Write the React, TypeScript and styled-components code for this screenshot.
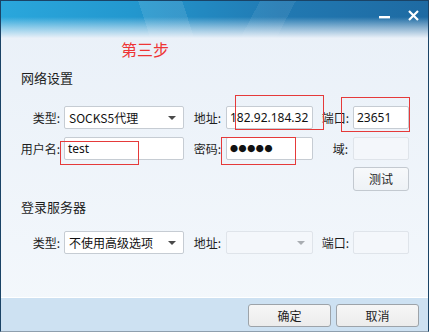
import React from 'react';
import styled, { createGlobalStyle } from 'styled-components';

const GlobalStyle = createGlobalStyle`
    html, body {
        margin: 0;
        padding: 0;
        background: #ffffff;
    }
    * {
        box-sizing: border-box;
    }
`;

const Window = styled.div`
    position: relative;
    width: 429px;
    height: 332px;
    display: flex;
    flex-direction: column;
    border: 1px solid #1a4366;
    border-bottom-color: #8e9fae;
    background: linear-gradient(180deg, #e9f0f8 0%, #f4f8fc 100%);
    font-family: "Noto Sans CJK SC", "Noto Sans", sans-serif;
    font-size: 12px;
    color: #1e1e1e;
    overflow: hidden;
`;

const TitleBar = styled.div`
    height: 37px;
    flex: 0 0 auto;
    display: flex;
    justify-content: flex-end;
    align-items: flex-start;
    gap: 18px;
    padding: 9px 9px 0 0;
    background:
        linear-gradient(180deg, rgba(233, 240, 248, 0) 0px, rgba(233, 240, 248, 0) 16px, rgba(233, 240, 248, 0.55) 27px, #e9f0f8 37px),
        linear-gradient(72deg, transparent 34%, rgba(255, 255, 255, 0.10) 34%, rgba(255, 255, 255, 0.10) 44%, transparent 44%),
        linear-gradient(118deg, transparent 58%, rgba(255, 255, 255, 0.07) 58%, rgba(255, 255, 255, 0.07) 66%, transparent 66%),
        linear-gradient(95deg, #2aa7dc 0%, #2398cf 30%, #2179b2 65%, #1e6aa2 100%);
`;

const ControlButton = styled.div`
    width: 11px;
    height: 11px;
    display: flex;
    align-items: center;
    justify-content: center;
`;

const StepTitle = styled.div`
    height: 22px;
    padding-left: 120px;
    font-size: 16px;
    line-height: 22px;
    color: #ee3535;
`;

const SectionTitle = styled.div<{ $top: number }>`
    margin-top: ${(p) => p.$top}px;
    padding-left: 20px;
    font-size: 13px;
    line-height: 18px;
`;

const FormGrid = styled.div<{ $top: number }>`
    margin-top: ${(p) => p.$top}px;
    padding-left: 19px;
    display: grid;
    grid-template-columns: 44px 120px 42px 87px 40px 56px;
    grid-auto-rows: 23px;
    row-gap: 8px;
    align-items: center;
`;

const Label = styled.div<{ $pad?: number }>`
    text-align: right;
    padding-right: ${(p) => p.$pad ?? 4}px;
    line-height: 23px;
    white-space: nowrap;
`;

const Field = styled.div<{ $disabled?: boolean; $dots?: boolean }>`
    height: 23px;
    border: 1px solid ${(p) => (p.$disabled ? '#dfe4ea' : '#c6ccd3')};
    border-radius: 2px;
    background: ${(p) => (p.$disabled ? '#f4f7fb' : '#ffffff')};
    padding-left: 3px;
    font-family: "Noto Sans", "Noto Sans CJK SC", sans-serif;
    font-size: ${(p) => (p.$dots ? '8px' : '12px')};
    letter-spacing: ${(p) => (p.$dots ? '0.6px' : '0')};
    line-height: 21px;
    color: #111;
    white-space: nowrap;
    overflow: hidden;
`;

const Select = styled(Field)`
    position: relative;
    font-family: "Noto Sans CJK SC", "Noto Sans", sans-serif;
    font-size: 12px;
    padding-left: 4px;
`;

const Arrow = styled.span<{ $disabled?: boolean }>`
    position: absolute;
    right: 7px;
    top: 9px;
    width: 0;
    height: 0;
    border-left: 4px solid transparent;
    border-right: 4px solid transparent;
    border-top: 4px solid ${(p) => (p.$disabled ? '#a9adb2' : '#4a4a4a')};
`;

const TestButton = styled.div`
    grid-column: 6;
    height: 24px;
    margin-top: -1px;
    border: 1px solid #c3c9d0;
    border-radius: 3px;
    background: linear-gradient(180deg, #f7f9fb 0%, #eef2f6 100%);
    text-align: center;
    line-height: 22px;
`;

const Footer = styled.div`
    margin-top: auto;
    height: 34px;
    flex: 0 0 auto;
    border-top: 1px solid #ffffff;
    background: #cde1f2;
    display: flex;
    justify-content: flex-end;
    gap: 5px;
    padding: 6px 9px 0 0;
`;

const DialogButton = styled.div`
    width: 83px;
    height: 23px;
    border: 1px solid #9da3a9;
    border-radius: 3px;
    background: linear-gradient(180deg, #f6f6f6 0%, #ececec 100%);
    text-align: center;
    line-height: 21px;
`;

const Annotation = styled.div`
    position: absolute;
    border: 1px solid #e53a3a;
    pointer-events: none;
`;

const marks = [
    { left: 234, top: 94, width: 89, height: 35 },
    { left: 340, top: 96, width: 69, height: 35 },
    { left: 59, top: 140, width: 79, height: 24 },
    { left: 220, top: 136, width: 75, height: 28 },
];

export default function App() {
    return (
        <>
            <GlobalStyle />
            <Window>
                <TitleBar>
                    <ControlButton>
                        <svg width="11" height="11" viewBox="0 0 11 11">
                            <rect x="0" y="6" width="11" height="2.4" fill="#ffffff" />
                        </svg>
                    </ControlButton>
                    <ControlButton>
                        <svg width="11" height="11" viewBox="0 0 11 11">
                            <path d="M1 1 L10 10 M10 1 L1 10" stroke="#ffffff" strokeWidth="2.2" />
                        </svg>
                    </ControlButton>
                </TitleBar>
                <StepTitle>第三步</StepTitle>

                <SectionTitle $top={9}>网络设置</SectionTitle>
                <FormGrid $top={19}>
                    <Label>类型:</Label>
                    <Select>
                        SOCKS5代理
                        <Arrow />
                    </Select>
                    <Label $pad={5}>地址:</Label>
                    <Field>182.92.184.32</Field>
                    <Label>端口:</Label>
                    <Field>23651</Field>

                    <Label>用户名:</Label>
                    <Field>test</Field>
                    <Label $pad={5}>密码:</Label>
                    <Field $dots>●●●●●</Field>
                    <Label $pad={5}>域:</Label>
                    <Field $disabled />

                    <TestButton>测试</TestButton>
                </FormGrid>

                <SectionTitle $top={7}>登录服务器</SectionTitle>
                <FormGrid $top={15}>
                    <Label>类型:</Label>
                    <Select>
                        不使用高级选项
                        <Arrow />
                    </Select>
                    <Label $pad={5}>地址:</Label>
                    <Select $disabled>
                        <Arrow $disabled />
                    </Select>
                    <Label>端口:</Label>
                    <Field $disabled />
                </FormGrid>

                <Footer>
                    <DialogButton>确定</DialogButton>
                    <DialogButton>取消</DialogButton>
                </Footer>

                {marks.map((m, i) => (
                    <Annotation key={i} style={{ left: m.left, top: m.top, width: m.width, height: m.height }} />
                ))}
            </Window>
        </>
    );
}
